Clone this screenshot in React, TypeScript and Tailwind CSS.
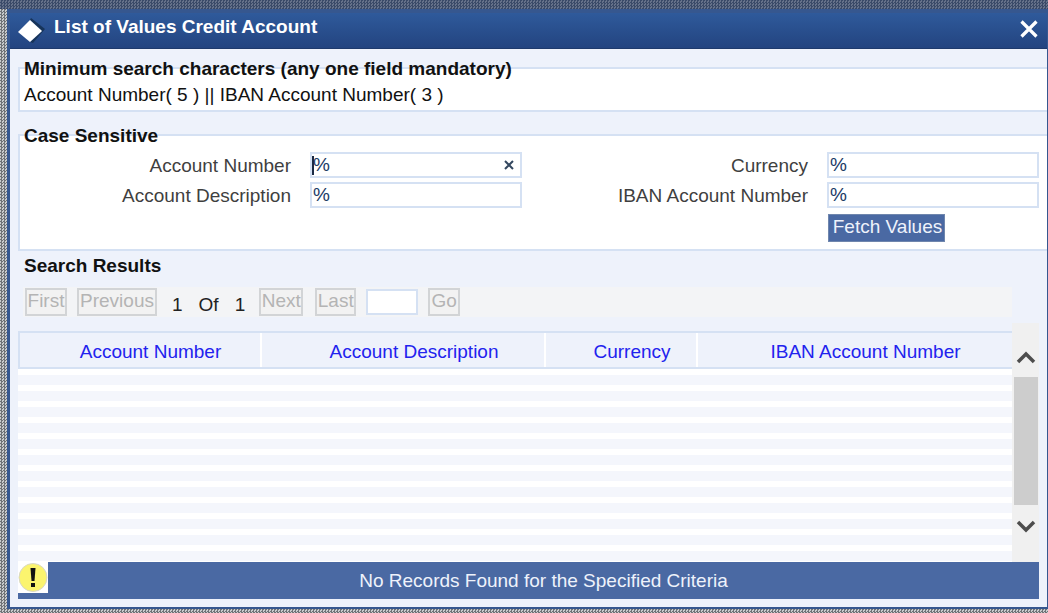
const rowIndexes = Array.from({ length: 13 }, (_, i) => i);

function Field({ label, labelWidth, inputWidth, cleared }: { label: string; labelWidth: string; inputWidth: string; cleared?: boolean }) {
  return (
    <div className="flex items-center">
      <label className={`${labelWidth} text-right text-[#3f3f3f] pr-[19px] pt-[2px]`}>{label}</label>
      <div className={`${inputWidth} h-[26px] bg-white border-2 border-[#d5e1f3] flex items-center justify-between pl-[1px] pr-[4px] text-[#1b3a66] relative`}>
        {cleared && <span className="absolute left-[0px] top-[2px] w-[2px] h-[19px] bg-[#1b2a44]" />}
        <span>%</span>
        {cleared && (
          <svg width="12" height="12" viewBox="0 0 12 12" className="mr-[1px]">
            <path d="M2 2 L10 10 M10 2 L2 10" stroke="#33475f" strokeWidth="2" />
          </svg>
        )}
      </div>
    </div>
  );
}

function PageButton({ children, width }: { children: string; width: string }) {
  return (
    <button className={`${width} h-[28px] bg-[#f2f2f2] border-2 border-[#d2d4d6] text-[#b4b4b4] flex items-center justify-center pb-[3px]`}>
      {children}
    </button>
  );
}

export default function App() {
  return (
    <div className="h-[613px] w-[1048px] overflow-hidden flex flex-col bg-[repeating-conic-gradient(#6f7276_0%_25%,#c9cbcd_0%_50%)] bg-[length:3px_3px] font-['Liberation_Sans',Arial,sans-serif] text-[19px] leading-[22px]">
      <div className="h-[9px] shrink-0 bg-[repeating-conic-gradient(#3a4a68_0%_25%,#66728a_0%_50%)] bg-[length:3px_3px]" />
      <div className="ml-[7px] h-[600px] flex flex-col border-l-[3px] border-r border-b-[2px] border-t-[4px] border-[#36578f]">
        {/* Title bar */}
        <div className="h-[36px] shrink-0 flex items-center justify-between bg-gradient-to-b from-[#2f5a9b] to-[#234480] border-b border-[#1e3a6c] pl-[8px] pr-[9px]">
          <div className="flex items-center gap-[8px]">
            <svg width="28" height="28" viewBox="0 0 28 28">
              <path d="M13 1 L27 12 L15 26 L12 25 L24 14 L12 3 Z" fill="#173459" />
              <path d="M12 3 L24 14 L12 25 L0 15 Z" fill="#ffffff" />
            </svg>
            <span className="font-bold text-white pb-[8px]">List of Values Credit Account</span>
          </div>
          <svg width="18" height="18" viewBox="0 0 18 18" className="mb-[3px]">
            <path d="M1.5 1.5 L16.5 16.5 M16.5 1.5 L1.5 16.5" stroke="#ffffff" strokeWidth="3.2" />
          </svg>
        </div>

        {/* Body */}
        <div className="flex-1 bg-[#eef2fb] pl-[8px] pr-[8px] flex flex-col min-h-0">
          {/* Minimum search */}
          <div className="mt-[18px] h-[45px] shrink-0 -mr-[8px] bg-white border-y-2 border-l-2 border-[#d5e1f3] relative pl-[4px] pt-[15px] text-[#111]">
            <span className="absolute left-[4px] -top-[11px] font-bold">Minimum search characters (any one field mandatory)</span>
            Account Number( 5 ) || IBAN Account Number( 3 )
          </div>

          {/* Case sensitive */}
          <div className="mt-[22px] h-[117px] shrink-0 -mr-[8px] bg-white border-y-2 border-l-2 border-[#d5e1f3] relative pt-[16px]">
            <span className="absolute left-[4px] -top-[11px] font-bold text-[#111]">Case Sensitive</span>
            <div className="flex flex-col gap-[4px]">
              <div className="flex">
                <Field label="Account Number" labelWidth="w-[290px]" inputWidth="w-[212px]" cleared />
                <Field label="Currency" labelWidth="w-[305px]" inputWidth="w-[212px]" />
              </div>
              <div className="flex">
                <Field label="Account Description" labelWidth="w-[290px]" inputWidth="w-[212px]" />
                <Field label="IBAN Account Number" labelWidth="w-[305px]" inputWidth="w-[212px]" />
              </div>
            </div>
            <button className="ml-[808px] mt-[6px] w-[117px] h-[28px] bg-[#4a69a3] border border-[#6f86ad] text-[#eef2fb] flex items-center justify-center pl-[2px] pb-[2px]">
              Fetch Values
            </button>
          </div>

          {/* Results */}
          <div className="mt-[4px] pl-[6px] h-[22px] shrink-0 font-bold text-[#111]">Search Results</div>
          <div className="flex flex-1 min-h-0">
            <div className="flex-1 flex flex-col min-w-0">
              <div className="mt-[10px] ml-[5px] pl-[2px] h-[30px] shrink-0 bg-[#f3f4f6] flex items-center">
                <PageButton width="w-[42px]">First</PageButton>
                <PageButton width="w-[80px] ml-[10px]">Previous</PageButton>
                <span className="ml-[15px] pt-[5px] text-[#222]">1</span>
                <span className="ml-[16px] pt-[5px] text-[#222]">Of</span>
                <span className="ml-[16px] pt-[5px] text-[#222]">1</span>
                <PageButton width="w-[44px] ml-[14px]">Next</PageButton>
                <PageButton width="w-[41px] ml-[12px]">Last</PageButton>
                <div className="ml-[10px] w-[52px] h-[26px] bg-white border-2 border-[#d5e1f3]" />
                <PageButton width="w-[32px] ml-[10px]">Go</PageButton>
              </div>
              <div className="mt-[14px] h-[38px] shrink-0 flex bg-[#eef2fb] border-y-2 border-l-2 border-[#d5e1f3] text-[#2222ee]">
                <div className="w-[242px] flex items-center justify-center border-r-2 border-white pl-[21px] pt-[3px]">Account Number</div>
                <div className="w-[284px] flex items-center justify-center border-r-2 border-white pl-[22px] pt-[3px]">Account Description</div>
                <div className="w-[152px] flex items-center justify-center border-r-2 border-white pl-[22px] pt-[3px]">Currency</div>
                <div className="flex-1 flex items-center justify-center pl-[21px] pt-[3px]">IBAN Account Number</div>
              </div>
              <div className="flex-1 min-h-0 overflow-hidden">
                {rowIndexes.map((i) => (
                  <div key={i} className="h-[16px] flex flex-col">
                    <div className="h-[6px] bg-white" />
                    <div className="h-[10px] bg-[#f4f6fc]" />
                  </div>
                ))}
              </div>
            </div>
            <div className="w-[27px] shrink-0 mt-[46px] bg-[#f0f0f0] flex flex-col items-center">
              <svg width="20" height="14" viewBox="0 0 20 14" className="mt-[27px] mb-[13px]">
                <path d="M2 12 L10 4 L18 12" fill="none" stroke="#4d4d4d" strokeWidth="3.5" />
              </svg>
              <div className="w-[24px] h-[128px] bg-[#cdcdcd]" />
              <svg width="20" height="14" viewBox="0 0 20 14" className="mt-[15px]">
                <path d="M2 2 L10 10 L18 2" fill="none" stroke="#4d4d4d" strokeWidth="3.5" />
              </svg>
            </div>
          </div>

          {/* Message bar */}
          <div className="h-[37px] shrink-0 bg-[#4a69a3] flex relative mb-[8px] text-[#eef2fb]">
            <div className="w-[30px] h-[31px] bg-white flex items-center justify-center shrink-0">
              <svg width="30" height="31" viewBox="0 0 30 31">
                <circle cx="15" cy="15.5" r="14" fill="#fbf46e" stroke="#d8d8c8" strokeWidth="1" />
                <path d="M12.5 6 H17.5 L16.5 19 H13.5 Z" fill="#111" />
                <rect x="13" y="21" width="4" height="4" fill="#111" />
              </svg>
            </div>
            <div className="flex-1 flex items-center justify-center">No Records Found for the Specified Criteria</div>
          </div>
        </div>
      </div>
    </div>
  );
}
